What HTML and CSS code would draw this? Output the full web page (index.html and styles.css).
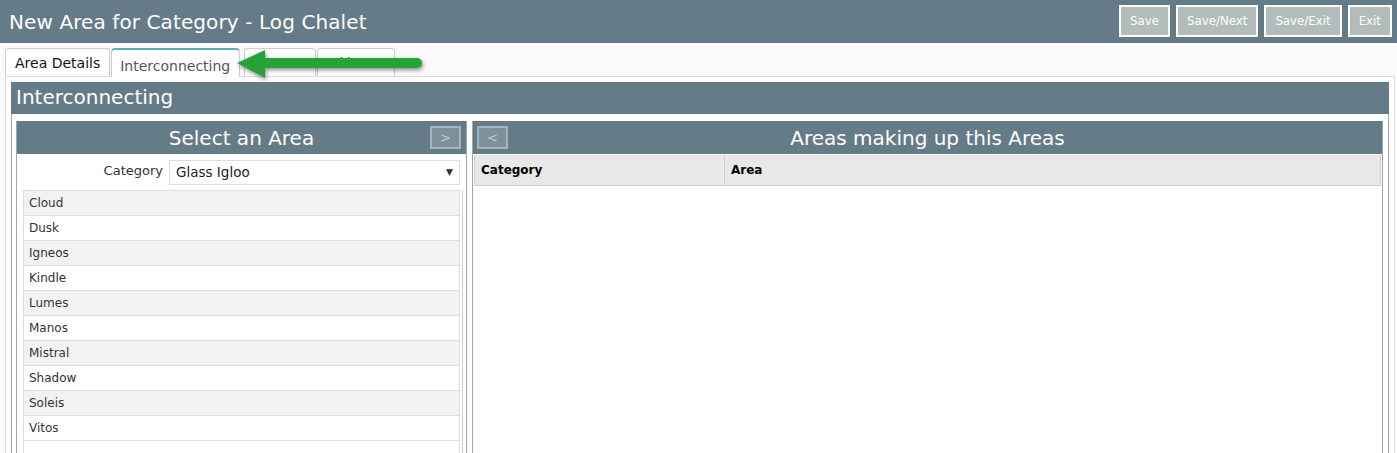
FILE: index.html
```html
<!DOCTYPE html>
<html lang="en">
<head>
    <meta charset="UTF-8">
    <meta name="viewport" content="width=device-width, initial-scale=1.0">
    <title>New Area for Category - Log Chalet</title>
    <link rel="stylesheet" href="styles.css">
</head>
<body>
    <header class="topbar">
        <h1>New Area for Category - Log Chalet</h1>
        <div class="actions">
            <button class="btn">Save</button>
            <button class="btn">Save/Next</button>
            <button class="btn">Save/Exit</button>
            <button class="btn">Exit</button>
        </div>
    </header>

    <div class="tabs">
        <ul class="tab-list">
            <li class="tab">Area Details</li>
            <li class="tab active">Interconnecting</li>
            <li class="tab tab-hidden">Users</li>
            <li class="tab tab-hidden">Add-Ons</li>
        </ul>

        <svg class="callout-arrow" width="200" height="40" viewBox="0 0 200 40">
            <path d="M7 19 L35 6 L35 14 L187 14 A5 5 0 0 1 187 24 L35 24 L35 34 Z" fill="#27a236"/>
        </svg>

        <div class="tab-panel">
            <h2 class="section-title">Interconnecting</h2>
            <div class="section-body">
                <div class="pane pane-left">
                    <div class="pane-head">
                        <span class="pane-title">Select an Area</span>
                        <button class="move-btn move-right">&gt;</button>
                    </div>
                    <div class="pane-body">
                        <div class="field-row">
                            <label class="field-label">Category</label>
                            <div class="select">
                                <span>Glass Igloo</span>
                                <span class="caret">&#9660;</span>
                            </div>
                        </div>
                        <div class="list-wrap">
                            <ul class="area-list">
                                <li>Cloud</li>
                                <li>Dusk</li>
                                <li>Igneos</li>
                                <li>Kindle</li>
                                <li>Lumes</li>
                                <li>Manos</li>
                                <li>Mistral</li>
                                <li>Shadow</li>
                                <li>Soleis</li>
                                <li>Vitos</li>
                            </ul>
                        </div>
                    </div>
                </div>

                <div class="pane pane-right">
                    <div class="pane-head">
                        <button class="move-btn move-left">&lt;</button>
                        <span class="pane-title">Areas making up this Areas</span>
                    </div>
                    <div class="pane-body flush">
                        <table class="grid">
                            <thead>
                                <tr>
                                    <th class="col-cat">Category</th>
                                    <th>Area</th>
                                </tr>
                            </thead>
                            <tbody></tbody>
                        </table>
                    </div>
                </div>
            </div>
        </div>
    </div>
</body>
</html>
```

FILE: styles.css
```css
body {
    margin: 0;
    padding: 0;
    font-family: "DejaVu Sans", Verdana, sans-serif;
    background-color: #fafafa;
    height: 453px;
    overflow: hidden;
}
ul {
    margin: 0;
    padding: 0;
    list-style: none;
}
.topbar {
    display: flex;
    align-items: center;
    justify-content: space-between;
    height: 43px;
    padding: 0 5px 0 9px;
    background-color: #657b87;
}
.topbar h1 {
    margin: 0;
    font-size: 20px;
    font-weight: normal;
    color: #fff;
    letter-spacing: 0.1px;
}
.actions {
    display: flex;
    gap: 6px;
    margin-top: -1px;
}
.btn {
    height: 32px;
    padding: 0 9px;
    border: 2px solid #fff;
    background-color: #b1bcbb;
    color: #fff;
    font-family: inherit;
    font-size: 11.8px;
}
.tabs {
    position: relative;
    padding: 5px 2px 0 5px;
}
.tab-list {
    display: flex;
    height: 28px;
}
.tab {
    box-sizing: border-box;
    height: 28px;
    padding: 6px 9px 0 9px;
    margin-right: 1px;
    border: 1px solid #ccc;
    border-bottom: none;
    border-radius: 4px 4px 0 0;
    background-color: #fff;
    font-size: 14px;
    color: #111;
}
.tab.active {
    border-top: 2px solid #58aeb9;
    padding: 8px 9px 0 8px;
    color: #555;
    position: relative;
    margin-bottom: -1px;
    height: 29px;
}
.tab-hidden {
    width: 72px;
    margin-left: 3px;
    padding-top: 7px;
    color: #333;
    font-size: 12px;
}
.tab-hidden + .tab-hidden {
    width: 78px;
    margin-left: 0;
}
.callout-arrow {
    position: absolute;
    left: 230px;
    top: 1px;
    filter: drop-shadow(1px 2px 2px rgba(0, 0, 0, 0.45));
    z-index: 2;
}
.tab-panel {
    border: 1px solid #ddd;
    background-color: #fff;
    padding: 5px;
    height: 420px;
}
.section-title {
    margin: 0;
    height: 32px;
    line-height: 31px;
    padding-left: 5px;
    background-color: #657b87;
    color: #fff;
    font-size: 20px;
    font-weight: normal;
}
.section-body {
    display: flex;
    gap: 5px;
    padding: 7px 5px 0 4px;
    border-left: 1px solid #9aa9aa;
    border-right: 1px solid #9aa9aa;
    height: 400px;
}
.pane {
    box-sizing: border-box;
    border: 1px solid #9aa9aa;
    border-top: none;
    background-color: #fff;
}
.pane-left {
    width: 451px;
}
.pane-right {
    flex: 1;
}
.pane-head {
    position: relative;
    display: flex;
    align-items: center;
    justify-content: center;
    height: 33px;
    background-color: #657b87;
}
.pane-title {
    color: #fff;
    font-size: 20px;
}
.move-btn {
    position: absolute;
    top: 5px;
    width: 31px;
    height: 23px;
    padding: 0;
    border: 2px solid #a7b4b9;
    background-color: #7e929c;
    color: #c3ccd0;
    font-family: inherit;
    font-size: 13px;
}
.move-right {
    right: 5px;
}
.move-left {
    left: 4px;
}
.pane-body {
    padding: 6px 3px 0 6px;
}
.pane-body.flush {
    padding: 1px 1px 0 1px;
}
.field-row {
    display: flex;
    align-items: center;
    height: 24px;
    margin-right: 3px;
}
.field-label {
    width: 140px;
    text-align: right;
    margin-right: 6px;
    font-size: 13px;
    color: #333;
    padding-bottom: 3px;
}
.select {
    box-sizing: border-box;
    flex: 1;
    display: flex;
    align-items: center;
    justify-content: space-between;
    height: 25px;
    padding: 0 6px 0 6px;
    border: 1px solid #ddd;
    font-size: 13.5px;
    color: #222;
}
.caret {
    font-size: 9px;
    color: #333;
}
.list-wrap {
    margin-top: 6px;
    border-right: 1px solid #ccc;
    height: 300px;
}
.area-list {
    border: 1px solid #ddd;
    margin-right: 2px;
    height: 300px;
}
.area-list li {
    box-sizing: border-box;
    height: 25px;
    line-height: 25px;
    padding-left: 5px;
    border-bottom: 1px solid #ddd;
    font-size: 12px;
    color: #333;
    background-color: #fff;
}
.area-list li:nth-child(odd) {
    background-color: #f2f2f2;
}
.grid {
    width: 100%;
    border-collapse: collapse;
}
.grid th {
    height: 30px;
    padding: 0 6px;
    text-align: left;
    font-size: 12px;
    color: #000;
    background-color: #e8e8e8;
    border: 1px solid #d0d0d0;
    border-top: none;
}
.grid th.col-cat {
    width: 237px;
}
```
